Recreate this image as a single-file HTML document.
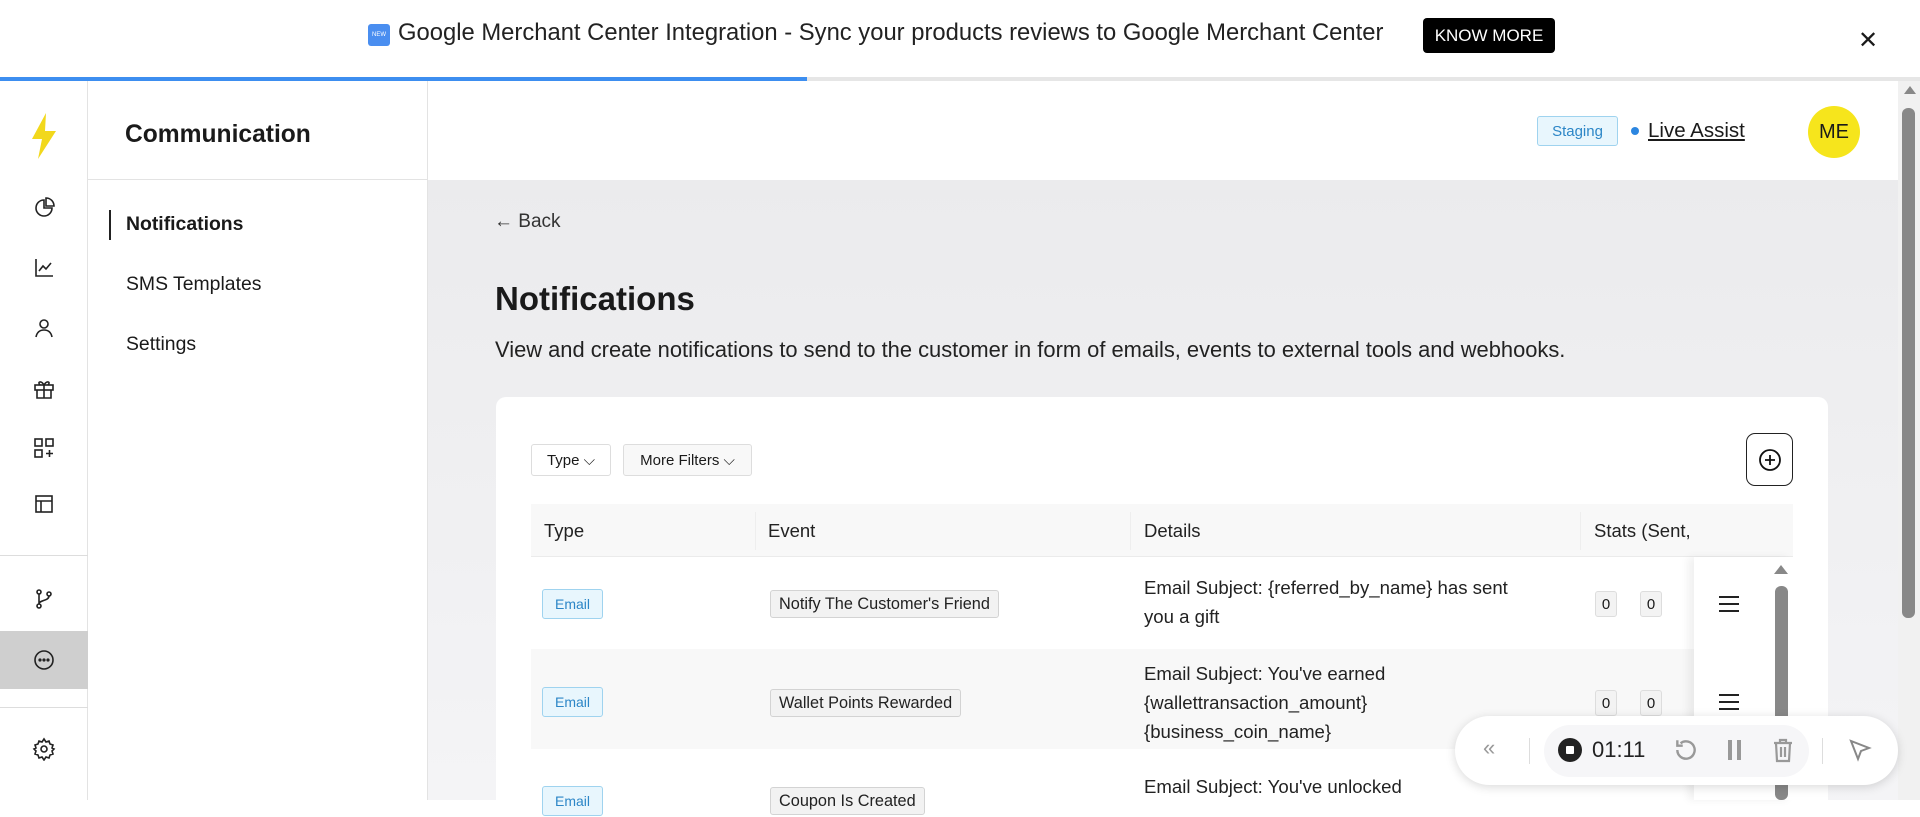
<!DOCTYPE html>
<html><head><meta charset="utf-8"><style>
*{box-sizing:border-box;margin:0;padding:0}
body{width:1920px;height:800px;overflow:hidden;background:#fff;font-family:"Liberation Sans",sans-serif;color:#1a1a1a;position:relative}
.abs{position:absolute}
.banner{left:0;top:0;width:1920px;height:78px;background:#fff;box-shadow:0 2px 4px rgba(0,0,0,.08)}
.prog{left:0;top:77px;height:4px;width:807px;background:#3d8ef0}
.progbg{left:807px;top:77px;height:4px;width:1113px;background:#e6e6e6}
.rail{left:0;top:81px;width:88px;height:719px;border-right:1px solid #e3e3e3;background:#fff}
.sub{left:88px;top:81px;width:340px;height:719px;border-right:1px solid #e3e3e3;background:#fff}
.ic{position:absolute;left:32px;width:24px;height:24px}
.main{left:428px;top:180px;width:1470px;height:620px;background:linear-gradient(180deg,#ebebed,#f4f4f6)}
.card{left:496px;top:397px;width:1332px;height:420px;background:#fff;border-radius:10px}
.btn{position:absolute;border:1px solid #ddd;border-radius:3px;font-size:15px;display:flex;align-items:center;justify-content:center;background:#fff}
.th{position:absolute;top:520px;font-size:18.5px;color:#222}
.email{position:absolute;left:542px;width:61px;height:30px;border:1px solid #9fd3ef;background:#e8f6fd;color:#2c86c7;font-size:14px;border-radius:3px;display:flex;align-items:center;justify-content:center}
.chip{position:absolute;left:770px;height:28px;border:1px solid #d3d3d3;background:#f2f2f2;border-radius:3px;font-size:16.3px;padding:0 8px;display:flex;align-items:center;color:#222}
.det{position:absolute;left:1144px;font-size:18.6px;line-height:29px;color:#222}
.st{position:absolute;width:22px;height:26px;border:1px solid #ddd;background:#f3f3f3;border-radius:3px;font-size:15px;display:flex;align-items:center;justify-content:center}
.ham{position:absolute;left:1719px;width:20px;height:16px;border-top:2px solid #222;border-bottom:2px solid #222}
.ham:after{content:"";position:absolute;left:0;right:0;top:5px;border-top:2px solid #222}
</style></head><body>
<div class="abs banner"></div>
<div class="abs" style="left:368px;top:24px;width:22px;height:22px;background:#4a8ef0;border-radius:3px;color:#fff;font-size:6px;display:flex;align-items:center;justify-content:center">NEW</div>
<div class="abs" style="left:398px;top:19px;font-size:23.8px;color:#222;white-space:nowrap">Google Merchant Center Integration - Sync your products reviews to Google Merchant Center</div>
<div class="abs" style="left:1423px;top:18px;width:132px;height:35px;background:#000;color:#fff;border-radius:4px;font-size:17px;display:flex;align-items:center;justify-content:center">KNOW MORE</div>
<div class="abs" style="left:1858px;top:26px;font-size:24px">✕</div>
<div class="abs prog"></div><div class="abs progbg"></div>

<div class="abs rail">
<svg class="ic" style="top:32px;left:30px;width:28px;height:46px" viewBox="0 0 28 46"><path d="M16 0L2 26h10L8 46 26 18H15z" fill="#f2d81c"/></svg>
<svg class="ic" style="top:115px" viewBox="0 0 24 24" fill="none" stroke="#222" stroke-width="1.6"><path d="M12 4a8 8 0 1 0 8 8h-8z"/><path d="M14 2v8h8a8 8 0 0 0-8-8z"/></svg>
<svg class="ic" style="top:175px" viewBox="0 0 24 24" fill="none" stroke="#222" stroke-width="1.6"><path d="M4 3v17h17M7 15l4-5 3 3 5-6"/></svg>
<svg class="ic" style="top:235px" viewBox="0 0 24 24" fill="none" stroke="#222" stroke-width="1.6"><circle cx="12" cy="8" r="4"/><path d="M4 21c1-5 4-7 8-7s7 2 8 7"/></svg>
<svg class="ic" style="top:296px" viewBox="0 0 24 24" fill="none" stroke="#222" stroke-width="1.6"><rect x="3" y="8" width="18" height="5"/><path d="M5 13v8h14v-8M12 8v13M12 8C9 3 5 5 8 8M12 8c3-5 7-3 4 0"/></svg>
<svg class="ic" style="top:355px" viewBox="0 0 24 24" fill="none" stroke="#222" stroke-width="1.6"><rect x="3" y="3" width="7" height="7"/><rect x="14" y="3" width="7" height="7"/><rect x="3" y="14" width="7" height="7"/><path d="M17.5 14v7M14 17.5h7"/></svg>
<svg class="ic" style="top:411px" viewBox="0 0 24 24" fill="none" stroke="#222" stroke-width="1.6"><rect x="4" y="4" width="16" height="16"/><path d="M4 9h16M9 9v11"/></svg>
<div class="abs" style="left:0;top:474px;width:88px;border-top:1px solid #ddd"></div>
<svg class="ic" style="top:506px" viewBox="0 0 24 24" fill="none" stroke="#222" stroke-width="1.6"><circle cx="7" cy="5" r="2"/><circle cx="7" cy="19" r="2"/><circle cx="17" cy="7" r="2"/><path d="M7 7v10M17 9c0 5-10 4-10 8"/></svg>
<div class="abs" style="left:0;top:550px;width:88px;height:58px;background:#cfcfcf"></div>
<svg class="ic" style="top:567px" viewBox="0 0 24 24" fill="none" stroke="#222" stroke-width="1.6"><circle cx="12" cy="12" r="9"/><circle cx="8" cy="12" r=".8" fill="#222"/><circle cx="12" cy="12" r=".8" fill="#222"/><circle cx="16" cy="12" r=".8" fill="#222"/></svg>
<div class="abs" style="left:0;top:626px;width:88px;border-top:1px solid #ddd"></div>
<svg class="ic" style="top:656px" viewBox="0 0 24 24" fill="none" stroke="#222" stroke-width="1.6"><circle cx="12" cy="12" r="3"/><path d="M12 2l2 3 3-1 1 3 3 1-1 3 2 1-2 2 1 3-3 1-1 3-3-1-2 3-2-3-3 1-1-3-3-1 1-3-2-2 2-1-1-3 3-1 1-3 3 1z"/></svg>
</div>

<div class="abs sub">
<div class="abs" style="left:37px;top:40px;font-size:24.6px;font-weight:bold;color:#1a1a1a">Communication</div>
<div class="abs" style="left:0;top:98px;width:340px;border-top:1px solid #e3e3e3"></div>
<div class="abs" style="left:21px;top:129px;height:30px;border-left:2px solid #222"></div>
<div class="abs" style="left:38px;top:132px;font-size:19.4px;font-weight:bold">Notifications</div>
<div class="abs" style="left:38px;top:192px;font-size:19.4px">SMS Templates</div>
<div class="abs" style="left:38px;top:252px;font-size:19.4px">Settings</div>
</div>

<div class="abs" style="left:428px;top:81px;width:1470px;height:99px;background:#fff"></div>
<div class="abs" style="left:1537px;top:116px;width:81px;height:30px;border:1px solid #9fd3ef;background:#e8f6fd;color:#2c86c7;font-size:15px;border-radius:3px;display:flex;align-items:center;justify-content:center">Staging</div>
<div class="abs" style="left:1631px;top:127px;width:8px;height:8px;border-radius:50%;background:#2c86e0"></div>
<div class="abs" style="left:1648px;top:119px;font-size:20.5px;text-decoration:underline">Live Assist</div>
<div class="abs" style="left:1808px;top:106px;width:52px;height:52px;border-radius:50%;background:#f6e51c;font-size:20px;display:flex;align-items:center;justify-content:center">ME</div>

<div class="abs main"></div>
<div class="abs" style="left:494px;top:211px;font-size:19px;color:#333">← Back</div>
<div class="abs" style="left:495px;top:280px;font-size:33px;font-weight:bold">Notifications</div>
<div class="abs" style="left:495px;top:337px;font-size:21.9px;color:#222;white-space:nowrap">View and create notifications to send to the customer in form of emails, events to external tools and webhooks.</div>

<div class="abs card"></div>
<div class="btn" style="left:531px;top:444px;width:80px;height:32px">Type&nbsp;⌵</div>
<div class="btn" style="left:623px;top:444px;width:129px;height:32px;background:#f8f8f8">More Filters&nbsp;⌵</div>
<div class="btn" style="left:1746px;top:433px;width:47px;height:53px;border:1px solid #222;border-radius:9px"><svg width="24" height="24" viewBox="0 0 24 24" fill="none" stroke="#111" stroke-width="1.8"><circle cx="12" cy="12" r="10"/><path d="M12 7v10M7 12h10"/></svg></div>

<div class="abs" style="left:531px;top:504px;width:1262px;height:53px;background:#f8f8f8;border-bottom:1px solid #ebebeb"></div>
<div class="abs" style="left:755px;top:512px;height:38px;border-left:1px solid #eee"></div>
<div class="abs" style="left:1130px;top:512px;height:38px;border-left:1px solid #eee"></div>
<div class="abs" style="left:1580px;top:512px;height:38px;border-left:1px solid #eee"></div>
<div class="th" style="left:544px">Type</div>
<div class="th" style="left:768px">Event</div>
<div class="th" style="left:1144px">Details</div>
<div class="th" style="left:1594px;white-space:nowrap;width:100px;overflow:hidden">Stats (Sent,</div>
<div class="abs" style="left:531px;top:649px;width:1262px;height:100px;background:#f8f8f8"></div>

<div class="email" style="top:589px">Email</div>
<div class="chip" style="top:590px">Notify The Customer's Friend</div>
<div class="det" style="top:573px">Email Subject: {referred_by_name} has sent<br>you a gift</div>
<div class="st" style="left:1595px;top:591px">0</div><div class="st" style="left:1640px;top:591px">0</div>

<div class="email" style="top:687px">Email</div>
<div class="chip" style="top:689px">Wallet Points Rewarded</div>
<div class="det" style="top:659px">Email Subject: You've earned<br>{wallettransaction_amount}<br>{business_coin_name}</div>
<div class="st" style="left:1595px;top:690px">0</div><div class="st" style="left:1640px;top:690px">0</div>

<div class="email" style="top:786px">Email</div>
<div class="chip" style="top:787px">Coupon Is Created</div>
<div class="det" style="top:772px">Email Subject: You've unlocked</div>

<div class="abs" style="left:1694px;top:557px;width:99px;height:243px;background:#fff;box-shadow:-6px 0 8px rgba(0,0,0,.06)"></div>
<div class="ham" style="top:596px"></div>
<div class="ham" style="top:694px"></div>
<div class="abs" style="left:1774px;top:565px;width:0;height:0;border-left:7px solid transparent;border-right:7px solid transparent;border-bottom:9px solid #888"></div>
<div class="abs" style="left:1775px;top:586px;width:13px;height:214px;background:#888;border-radius:6px"></div>

<div class="abs" style="left:1898px;top:81px;width:22px;height:719px;background:#f1f1f1"></div>
<div class="abs" style="left:1904px;top:86px;border-left:6px solid transparent;border-right:6px solid transparent;border-bottom:8px solid #888;width:0"></div>
<div class="abs" style="left:1902px;top:108px;width:13px;height:510px;background:#888;border-radius:6px"></div>

<div class="abs" style="left:1455px;top:716px;width:443px;height:69px;background:#fff;border-radius:35px;box-shadow:0 2px 10px rgba(0,0,0,.15)"></div>
<div class="abs" style="left:1544px;top:725px;width:265px;height:52px;background:#f6f6f8;border-radius:26px"></div>
<div class="abs" style="left:1483px;top:735px;font-size:22px;color:#999">«</div>
<div class="abs" style="left:1529px;top:738px;height:26px;border-left:1px solid #ddd"></div>
<div class="abs" style="left:1558px;top:738px;width:24px;height:24px;border-radius:50%;background:#222"><div style="position:absolute;left:8px;top:8px;width:8px;height:8px;background:#fff;border-radius:1px"></div></div>
<div class="abs" style="left:1592px;top:737px;font-size:22px;color:#222">01:11</div>
<svg class="abs" style="left:1673px;top:737px" width="26" height="26" viewBox="0 0 24 24" fill="none" stroke="#999" stroke-width="2.2"><path d="M4 12a8 8 0 1 0 3-6.2M4 3v5h5"/></svg>
<div class="abs" style="left:1728px;top:740px;width:4px;height:20px;background:#999"></div><div class="abs" style="left:1737px;top:740px;width:4px;height:20px;background:#999"></div>
<svg class="abs" style="left:1771px;top:737px" width="24" height="26" viewBox="0 0 24 26" fill="none" stroke="#999" stroke-width="2.2"><path d="M3 6h18M9 6V3h6v3M5 6l1 18h12l1-18M10 10v10M14 10v10"/></svg>
<div class="abs" style="left:1822px;top:738px;height:26px;border-left:1px solid #ddd"></div>
<svg class="abs" style="left:1848px;top:738px" width="24" height="24" viewBox="0 0 24 24" fill="none" stroke="#888" stroke-width="2"><path d="M3 3l7 18 3-8 8-3z"/></svg>
</body></html>
